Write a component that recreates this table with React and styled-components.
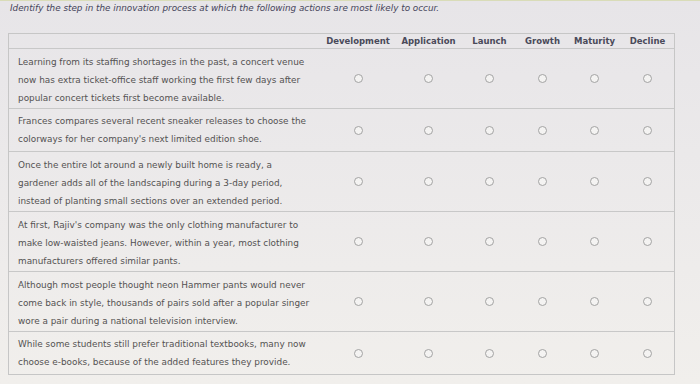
import React from "react";
import styled, { createGlobalStyle } from "styled-components";

const Global = createGlobalStyle`
  html, body { margin: 0; padding: 0; }
  body {
    width: 700px;
    height: 384px;
    overflow: hidden;
    background: linear-gradient(180deg, #e7e5e8 0%, #ebe9ea 40%, #f1efec 100%);
    font-family: "DejaVu Sans", Verdana, sans-serif;
  }
`;

const COLS = "312px 74px 67px 55px 51px 53px 53px";

const Page = styled.div`
  position: relative;
  height: 384px;
  padding: 2px 0 0 8px;
  box-sizing: border-box;
  border-top: 1px solid #d9dcb8;
`;

const Title = styled.div`
  font-style: italic;
  font-size: 8.8px;
  color: #45445a;
  line-height: 11px;
  padding-left: 2px;
`;

const Table = styled.div`
  margin-top: 19px;
  width: 665px;
  border: 1px solid #c6c6c6;
`;

const Row = styled.div`
  display: grid;
  grid-template-columns: ${COLS};
  align-items: center;
  border-top: ${(p) => (p.$first ? "none" : "1px solid #c8c8c8")};
`;

const HeadCell = styled.div`
  text-align: center;
  font-weight: bold;
  font-size: 8.5px;
  color: #4a4a5a;
  height: 14px;
  line-height: 14px;
  white-space: nowrap;
`;

const Question = styled.div`
  font-size: 8.9px;
  line-height: 18px;
  color: #545252;
  padding: ${(p) => (p.$short ? "3px 0 3px 9px" : "4px 0 1px 9px")};
  white-space: nowrap;
`;

const Cell = styled.div`
  display: flex;
  justify-content: center;
  align-items: center;
`;

const Radio = styled.span`
  width: 7px;
  height: 7px;
  border: 1px solid #a3a3a3;
  border-radius: 50%;
  background: #f4f3f2;
`;

const headers = ["Development", "Application", "Launch", "Growth", "Maturity", "Decline"];

const questions = [
  [
    "Learning from its staffing shortages in the past, a concert venue",
    "now has extra ticket-office staff working the first few days after",
    "popular concert tickets first become available.",
  ],
  [
    "Frances compares several recent sneaker releases to choose the",
    "colorways for her company's next limited edition shoe.",
  ],
  [
    "Once the entire lot around a newly built home is ready, a",
    "gardener adds all of the landscaping during a 3-day period,",
    "instead of planting small sections over an extended period.",
  ],
  [
    "At first, Rajiv's company was the only clothing manufacturer to",
    "make low-waisted jeans. However, within a year, most clothing",
    "manufacturers offered similar pants.",
  ],
  [
    "Although most people thought neon Hammer pants would never",
    "come back in style, thousands of pairs sold after a popular singer",
    "wore a pair during a national television interview.",
  ],
  [
    "While some students still prefer traditional textbooks, many now",
    "choose e-books, because of the added features they provide.",
  ],
];

export default function App() {
  return (
    <Page>
      <Global />
      <Title>
        Identify the step in the innovation process at which the following actions are most likely to occur.
      </Title>
      <Table>
        <Row $first>
          <HeadCell />
          {headers.map((h) => (
            <HeadCell key={h}>{h}</HeadCell>
          ))}
        </Row>
        {questions.map((lines, i) => (
          <Row key={i}>
            <Question $short={lines.length < 3}>
              {lines.map((l, j) => (
                <React.Fragment key={j}>
                  {l}
                  {j < lines.length - 1 && <br />}
                </React.Fragment>
              ))}
            </Question>
            {headers.map((h) => (
              <Cell key={h}>
                <Radio />
              </Cell>
            ))}
          </Row>
        ))}
      </Table>
    </Page>
  );
}
